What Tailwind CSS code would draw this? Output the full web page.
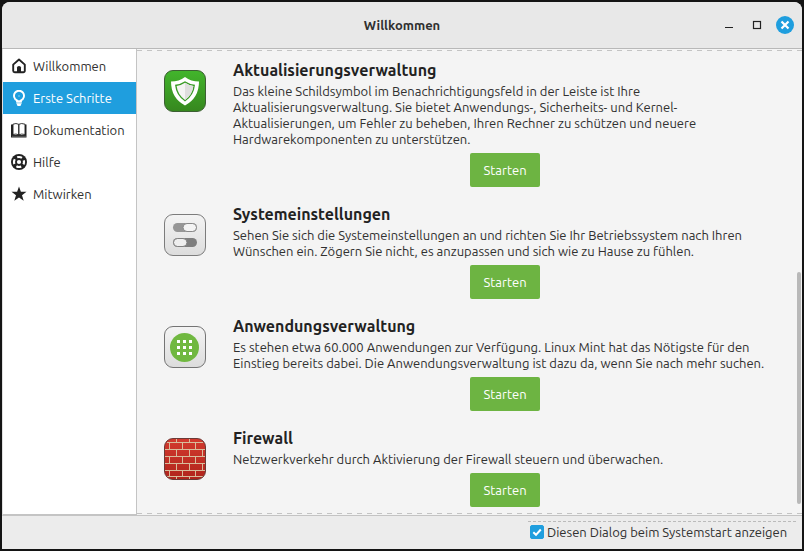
<!DOCTYPE html>
<html lang="de">
<head>
  <meta charset="UTF-8">
  <meta name="viewport" content="width=device-width, initial-scale=1.0">
  <title>Willkommen</title>
  <script src="https://cdn.jsdelivr.net/npm/@tailwindcss/browser@4"></script>
</head>
<body class="bg-[#141414] min-h-screen flex flex-col p-0.5 font-['Ubuntu','Noto_Sans',sans-serif] text-[13px] leading-4 text-[#303030]">
  <div class="flex-1 flex flex-col bg-[#ececec] rounded-t-lg overflow-hidden">

    <!-- Title bar -->
    <header class="relative flex items-center justify-end h-[47px] shrink-0 bg-[#e8e8e8] border-b border-[#b8b8b8] px-2">
      <h1 class="absolute inset-x-0 text-center text-[13px] font-bold pointer-events-none">Willkommen</h1>
      <div class="flex items-center gap-2.5">
        <button aria-label="Minimieren" class="size-[18px] flex items-center justify-center">
          <svg class="size-4" viewBox="0 0 16 16"><path d="M4 10.500h8" stroke="#222" stroke-width="1.200"/></svg>
        </button>
        <button aria-label="Maximieren" class="size-[18px] flex items-center justify-center">
          <svg class="size-4" viewBox="0 0 16 16"><rect x="4.500" y="4.500" width="7" height="7" fill="none" stroke="#222" stroke-width="1.200"/></svg>
        </button>
        <button aria-label="Schließen" class="size-[18px] rounded-full bg-[#1f9ede] flex items-center justify-center">
          <svg class="size-4" viewBox="0 0 16 16"><path d="M4.500 4.500l7 7M11.500 4.500l-7 7" stroke="#fff" stroke-width="2.200"/></svg>
        </button>
      </div>
    </header>

    <div class="flex-1 flex">
      <!-- Sidebar -->
      <nav class="w-[135px] shrink-0 bg-white border-x border-[#c4c4c4] border-l-[#e0e0e0] border-b-2 pt-px">
        <a href="#" class="flex items-center gap-1.5 h-8 px-2">
          <svg class="size-4" viewBox="0 0 16 16"><path d="M2.200 6.600L8 1.500l5.800 5.100v6.200a1.500 1.500 0 0 1-1.500 1.500H3.700a1.500 1.500 0 0 1-1.500-1.500z" fill="none" stroke="#222" stroke-width="1.900" stroke-linejoin="round"/><path d="M6 14V9.500Q6 8 8 8t2 1.500V14z" fill="#222"/></svg>
          <span>Willkommen</span>
        </a>
        <a href="#" class="flex items-center gap-1.5 h-8 px-2 bg-[#1f9ede] text-white">
          <svg class="size-4" viewBox="0 0 16 16"><path d="M6 11.200V10.300A5 5 0 1 1 10 10.300v.9z" fill="none" stroke="#fff" stroke-width="1.900" stroke-linejoin="round"/><path d="M5.500 11h5v2.500L9.500 16h-3l-1-2.500z" fill="#fff"/><path d="M6 12.900h4" stroke="#1f9ede" stroke-width=".5"/><circle cx="8" cy="6" r="1" fill="#fff" opacity=".3"/></svg>
          <span>Erste Schritte</span>
        </a>
        <a href="#" class="flex items-center gap-1.5 h-8 px-2">
          <svg class="size-4" viewBox="0 0 16 16"><path d="M0 2.500h2V13h12V2.500h1.500v13H0z" fill="#222"/><path d="M2 12.500V2.200Q5 .8 7.800 2.300 10.500.8 14 2.200v10.300q-3.500-1-6.200.3Q5 11.500 2 12.500z" fill="#fff" stroke="#222" stroke-width=".9"/><path d="M7.800 2.300v11" stroke="#222" stroke-width="1.300"/><path d="M1 14.300h14" stroke="#999" stroke-width=".5"/></svg>
          <span>Dokumentation</span>
        </a>
        <a href="#" class="flex items-center gap-1.5 h-8 px-2">
          <svg class="size-4" viewBox="0 0 16 16"><circle cx="8" cy="8" r="8" fill="#222"/><circle cx="8" cy="8" r="5" fill="none" stroke="#fff" stroke-width="2.200" stroke-dasharray="5 2.854" stroke-dashoffset="2.500"/><circle cx="8" cy="8" r="2.100" fill="#fff"/></svg>
          <span>Hilfe</span>
        </a>
        <a href="#" class="flex items-center gap-1.5 h-8 px-2">
          <svg class="size-4" viewBox="0 0 16 16"><path d="M8 .5l1.900 5.300h5.600L11 9.200l1.700 5.600L8 11.500l-4.700 3.300L5 9.200.5 5.800h5.600z" fill="#222"/></svg>
          <span>Mitwirken</span>
        </a>
      </nav>

      <!-- Page content -->
      <main class="relative flex-1 flex flex-col gap-4 bg-[#f4f4f4] border-b border-[#c4c4c4] pl-[27px] pr-[25px] pt-2.5 pb-2">
        <svg class="absolute inset-x-0 top-px w-full h-px" aria-hidden="true"><path d="M0 .5h2000" stroke="#c4c4c4" stroke-dasharray="5 5"/></svg>
        <svg class="absolute inset-x-0 bottom-px w-full h-px" aria-hidden="true"><path d="M0 .5h2000" stroke="#c4c4c4" stroke-dasharray="5 5"/></svg>
        <div class="absolute right-px top-[223px] bottom-[11px] w-1 rounded-full bg-[#b8b8b8]"></div>

        <section class="flex gap-[27px]">
          <svg class="size-[42px] mt-[11px] shrink-0" viewBox="0 0 42 42">
            <defs><linearGradient id="green" x2="0" y2="1"><stop stop-color="#42b52c"/><stop offset="1" stop-color="#36871e"/></linearGradient></defs>
            <rect x=".5" y=".5" width="41" height="41" rx="8.500" fill="url(#green)" stroke="#3c5f33"/>
            <path d="M21 7q6 4.500 14 4.500Q35 28 21 35.500 7 28 7 11.500q8 0 14-4.500z" fill="#fff"/>
            <path d="M21 11.200q4.500 3 10 3.500Q30 25.500 21 31.500 12 25.500 11 14.700q5.500-.5 10-3.500z" fill="#3a9c27"/>
            <path d="M21 12.800q4.200 2.700 8.400 3.300Q28.300 25 21 29.900 13.700 25 12.600 16.100q4.200-.6 8.400-3.300z" fill="#f4f4f4"/>
            <path d="M21 12.800q4.200 2.700 8.400 3.300Q28.300 25 21 29.900z" fill="#dedede"/>
          </svg>
          <div class="flex-1 flex flex-col">
            <h2 class="mb-0.5 text-base leading-[22px] font-semibold text-[#222]">Aktualisierungsverwaltung</h2>
            <p class="whitespace-nowrap">Das kleine Schildsymbol im Benachrichtigungsfeld in der Leiste ist Ihre<br>Aktualisierungsverwaltung. Sie bietet Anwendungs-, Sicherheits- und Kernel-<br>Aktualisierungen, um Fehler zu beheben, Ihren Rechner zu schützen und neuere<br>Hardwarekomponenten zu unterstützen.</p>
            <button class="self-center mt-1.5 w-[70px] h-[34px] rounded-xs bg-[#6db442] text-white">Starten</button>
          </div>
        </section>

        <section class="flex gap-[27px]">
          <svg class="size-[42px] mt-[11px] shrink-0" viewBox="0 0 42 42">
            <defs><linearGradient id="grey" x2="0" y2="1"><stop stop-color="#f4f4f4"/><stop offset="1" stop-color="#dcdcdc"/></linearGradient></defs>
            <rect x=".5" y=".5" width="41" height="41" rx="8.500" fill="url(#grey)" stroke="#7c7c7c"/>
            <rect x="9" y="9" width="24" height="9" rx="4.500" fill="#969696"/>
            <rect x="19" y="9.500" width="13.500" height="8" rx="4" fill="#f4f4f4" stroke="#888"/>
            <rect x="9" y="24" width="24" height="9" rx="4.500" fill="#7e7e7e"/>
            <rect x="9.500" y="24.500" width="13.500" height="8" rx="4" fill="#eee" stroke="#808080"/>
          </svg>
          <div class="flex-1 flex flex-col">
            <h2 class="mb-0.5 text-base leading-[22px] font-semibold text-[#222]">Systemeinstellungen</h2>
            <p class="whitespace-nowrap">Sehen Sie sich die Systemeinstellungen an und richten Sie Ihr Betriebssystem nach Ihren<br>Wünschen ein. Zögern Sie nicht, es anzupassen und sich wie zu Hause zu fühlen.</p>
            <button class="self-center mt-1.5 w-[70px] h-[34px] rounded-xs bg-[#6db442] text-white">Starten</button>
          </div>
        </section>

        <section class="flex gap-[27px]">
          <svg class="size-[42px] mt-[11px] shrink-0" viewBox="0 0 42 42">
            <rect x=".5" y=".5" width="41" height="41" rx="8.500" fill="url(#grey)" stroke="#747474"/>
            <circle cx="20.500" cy="21.500" r="14.500" fill="#70b840"/>
            <path d="M13 15.500h3m3 0h3m3 0h3M13 21.500h3m3 0h3m3 0h3M13 27.500h3m3 0h3m3 0h3" stroke="#fff" stroke-width="3"/>
          </svg>
          <div class="flex-1 flex flex-col">
            <h2 class="mb-0.5 text-base leading-[22px] font-semibold text-[#222]">Anwendungsverwaltung</h2>
            <p class="whitespace-nowrap">Es stehen etwa 60.000 Anwendungen zur Verfügung. Linux Mint hat das Nötigste für den<br>Einstieg bereits dabei. Die Anwendungsverwaltung ist dazu da, wenn Sie nach mehr suchen.</p>
            <button class="self-center mt-1.5 w-[70px] h-[34px] rounded-xs bg-[#6db442] text-white">Starten</button>
          </div>
        </section>

        <section class="flex gap-[27px]">
          <svg class="size-[42px] mt-[11px] shrink-0" viewBox="0 0 42 42">
            <defs><linearGradient id="red" x2="0" y2="1"><stop stop-color="#d33a2e"/><stop offset="1" stop-color="#b0241c"/></linearGradient></defs>
            <rect x=".5" y=".5" width="41" height="41" rx="8.500" fill="url(#red)"/>
            <path d="M3 4.500h36M1 11.500h40M1 18.500h40M1 25.500h40M1 32.500h40M3 38.500h36M5.500 4.500v7M18.500 4.500v7M31.500 4.500v7M12.500 11.500v7M25.500 11.500v7M38.500 11.500v7M5.500 18.500v7M18.500 18.500v7M31.500 18.500v7M12.500 25.500v7M25.500 25.500v7M38.500 25.500v7M5.500 32.500v6M18.500 32.500v6M31.500 32.500v6M12.500 1v3.500M25.500 1v3.500M12.500 38.500V41M25.500 38.500V41" stroke="#d8bc9c" stroke-width="1"/>
            <rect x=".5" y=".5" width="41" height="41" rx="8.500" fill="none" stroke="#6b3a37"/>
          </svg>
          <div class="flex-1 flex flex-col">
            <h2 class="mb-0.5 text-base leading-[22px] font-semibold text-[#222]">Firewall</h2>
            <p class="whitespace-nowrap">Netzwerkverkehr durch Aktivierung der Firewall steuern und überwachen.</p>
            <button class="self-center mt-1.5 w-[70px] h-[34px] rounded-xs bg-[#6db442] text-white">Starten</button>
          </div>
        </section>
      </main>
    </div>

    <!-- Footer -->
    <footer class="flex justify-end shrink-0 h-[33px] px-1.5 pt-[5px] pb-1.5">
      <label class="flex items-center gap-[3px] w-[268px] border-t border-dashed border-[#bbb] pl-0.5 pb-px">
        <span class="relative flex size-3.5">
          <input type="checkbox" checked class="peer appearance-none size-3.5 rounded-xs bg-white border border-[#b0b0b0] checked:bg-[#1f9ede] checked:border-[#1f9ede]">
          <svg class="absolute inset-0 size-3.5 hidden peer-checked:block pointer-events-none" viewBox="0 0 14 14"><path d="M3.300 7.200l2.700 2.600 4.800-5.300" fill="none" stroke="#fff" stroke-width="2"/></svg>
        </span>
        Diesen Dialog beim Systemstart anzeigen
      </label>
    </footer>
  </div>
</body>
</html>
